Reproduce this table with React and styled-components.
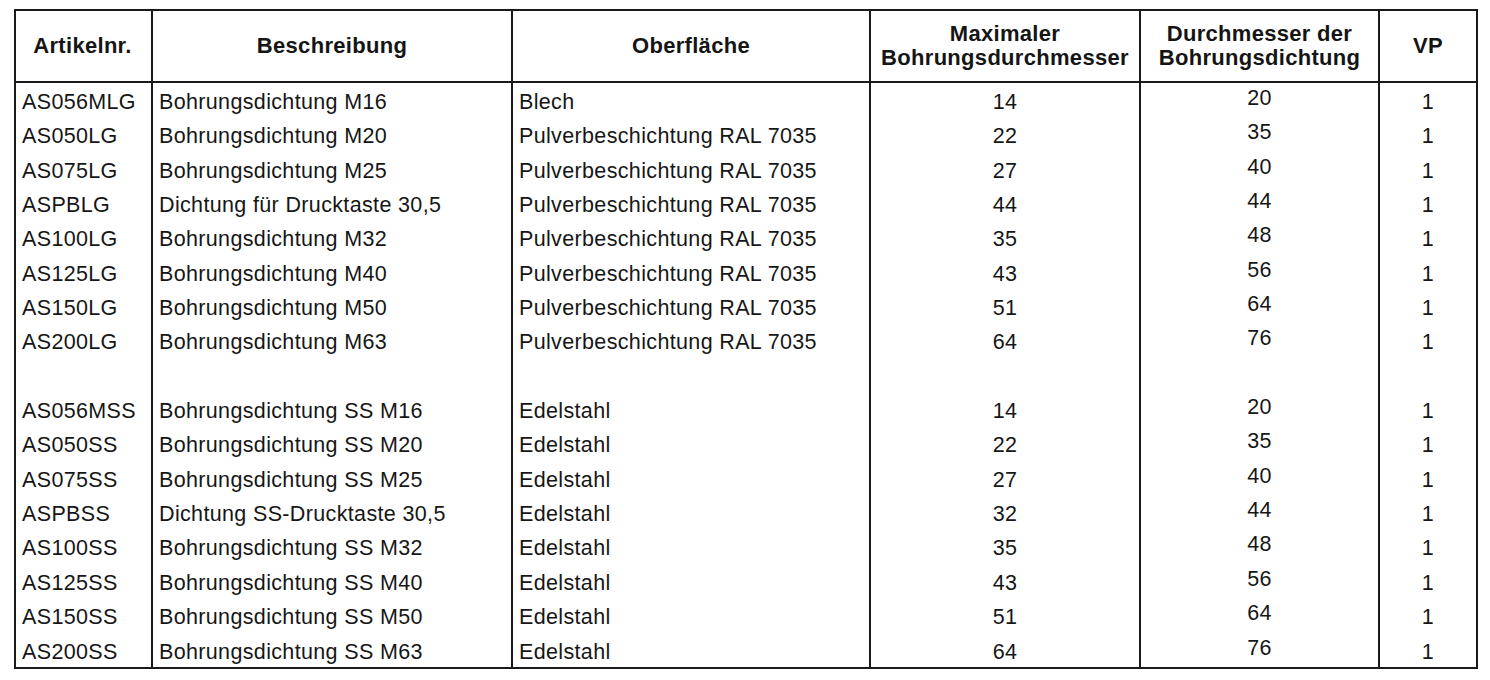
import React from "react";
import styled, { createGlobalStyle } from "styled-components";

const GlobalStyle = createGlobalStyle`
  html, body {
    margin: 0;
    padding: 0;
    background: #fff;
  }
  body {
    font-family: "Liberation Sans", Arial, sans-serif;
    color: #1c1c1c;
  }
`;

const lg = [
  ["AS056MLG", "Bohrungsdichtung M16", "Blech", "14", "20", "1"],
  ["AS050LG", "Bohrungsdichtung M20", "Pulverbeschichtung RAL 7035", "22", "35", "1"],
  ["AS075LG", "Bohrungsdichtung M25", "Pulverbeschichtung RAL 7035", "27", "40", "1"],
  ["ASPBLG", "Dichtung für Drucktaste 30,5", "Pulverbeschichtung RAL 7035", "44", "44", "1"],
  ["AS100LG", "Bohrungsdichtung M32", "Pulverbeschichtung RAL 7035", "35", "48", "1"],
  ["AS125LG", "Bohrungsdichtung M40", "Pulverbeschichtung RAL 7035", "43", "56", "1"],
  ["AS150LG", "Bohrungsdichtung M50", "Pulverbeschichtung RAL 7035", "51", "64", "1"],
  ["AS200LG", "Bohrungsdichtung M63", "Pulverbeschichtung RAL 7035", "64", "76", "1"],
];

const ss = [
  ["AS056MSS", "Bohrungsdichtung SS M16", "Edelstahl", "14", "20", "1"],
  ["AS050SS", "Bohrungsdichtung SS M20", "Edelstahl", "22", "35", "1"],
  ["AS075SS", "Bohrungsdichtung SS M25", "Edelstahl", "27", "40", "1"],
  ["ASPBSS", "Dichtung SS-Drucktaste 30,5", "Edelstahl", "32", "44", "1"],
  ["AS100SS", "Bohrungsdichtung SS M32", "Edelstahl", "35", "48", "1"],
  ["AS125SS", "Bohrungsdichtung SS M40", "Edelstahl", "43", "56", "1"],
  ["AS150SS", "Bohrungsdichtung SS M50", "Edelstahl", "51", "64", "1"],
  ["AS200SS", "Bohrungsdichtung SS M63", "Edelstahl", "64", "76", "1"],
];

// width, alignment, lifted text (the Durchmesser column sits a bit higher)
const columns = [
  { width: 135, align: "left" },
  { width: 360, align: "left" },
  { width: 358, align: "left" },
  { width: 270, align: "center" },
  { width: 239, align: "center", lift: true },
  { width: 98, align: "center" },
];

const headers = [
  ["Artikelnr."],
  ["Beschreibung"],
  ["Oberfläche"],
  ["Maximaler", "Bohrungsdurchmesser"],
  ["Durchmesser der", "Bohrungsdichtung"],
  ["VP"],
];

const App = () => {
  const rows = [...lg, null, ...ss];

  return (
    <>
      <GlobalStyle />
      <Page>
        <Table>
          <colgroup>
            {columns.map((c, i) => (
              <col key={i} style={{ width: c.width }} />
            ))}
          </colgroup>
          <thead>
            <tr>
              {headers.map((h, i) => (
                <HeadCell key={i}>
                  {h.map((line) => (
                    <HeadLine key={line}>{line}</HeadLine>
                  ))}
                </HeadCell>
              ))}
            </tr>
          </thead>
          <tbody>
            {rows.map((row, r) => (
              <tr key={r}>
                {columns.map((c, i) => (
                  <Cell key={i} $align={c.align} $lift={c.lift}>
                    {row ? row[i] : "\u00a0"}
                  </Cell>
                ))}
              </tr>
            ))}
          </tbody>
        </Table>
      </Page>
    </>
  );
};

const Page = styled.div`
  padding: 9px 0 0 14px;
`;

const Table = styled.table`
  table-layout: fixed;
  width: 1462px;
  border-collapse: separate;
  border-spacing: 0;
  border: 2px solid #1a1a1a;
`;

const HeadCell = styled.th`
  box-sizing: border-box;
  height: 72px;
  padding: 0 4px;
  border-bottom: 2px solid #1a1a1a;
  font-size: 22px;
  font-weight: 700;
  letter-spacing: 0.3px;
  color: #151515;
  text-align: center;
  vertical-align: middle;
  white-space: nowrap;

  &:first-child {
    padding-left: 2px;
  }

  & + & {
    border-left: 2px solid #1a1a1a;
  }
`;

const HeadLine = styled.div`
  line-height: 24px;
`;

const Cell = styled.td`
  box-sizing: border-box;
  padding: ${(p) => (p.$lift ? "0 6px 4px" : "4px 6px 0")};
  line-height: 30.35px;
  font-size: 21.5px;
  letter-spacing: 0.35px;
  color: #161616;
  text-align: ${(p) => p.$align};
  white-space: nowrap;
  overflow: hidden;

  &:first-child {
    padding-left: 6px;
    padding-right: 0;
  }

  & + & {
    border-left: 2px solid #1a1a1a;
  }
`;

export default App;
